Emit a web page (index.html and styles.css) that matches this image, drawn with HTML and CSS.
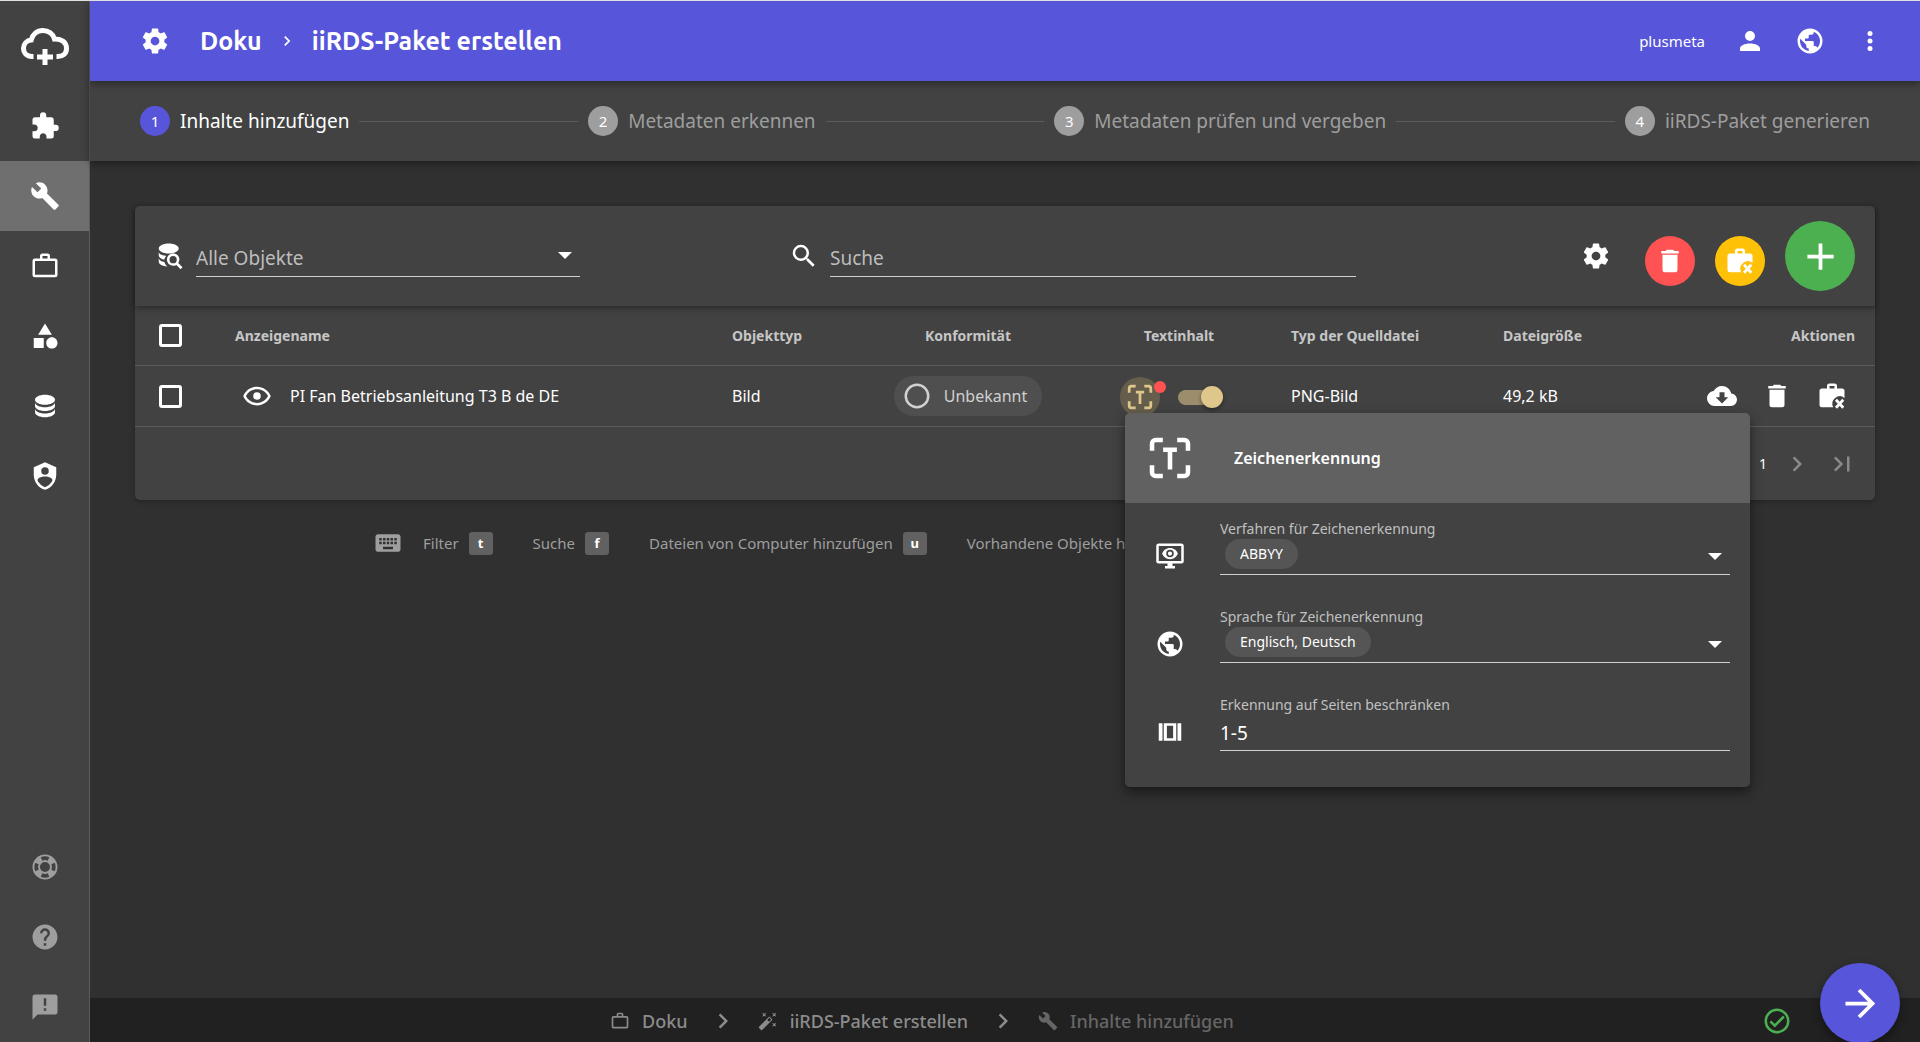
FILE: index.html
```html
<!DOCTYPE html>
<html lang="de">
<head>
<meta charset="utf-8">
<meta name="viewport" content="width=device-width, initial-scale=1">
<title>iiRDS-Paket erstellen</title>
<link rel="stylesheet" href="styles.css">
</head>
<body>
<svg class="sprite" aria-hidden="true">
  <symbol id="cog" viewBox="0 0 24 24"><path d="M12,15.5A3.5,3.5 0 0,1 8.5,12A3.5,3.5 0 0,1 12,8.5A3.5,3.5 0 0,1 15.5,12A3.5,3.5 0 0,1 12,15.5M19.43,12.97C19.47,12.65 19.5,12.33 19.5,12C19.5,11.67 19.47,11.34 19.43,11L21.54,9.37C21.73,9.22 21.78,8.95 21.66,8.73L19.66,5.27C19.54,5.05 19.27,4.96 19.05,5.05L16.56,6.05C16.04,5.66 15.5,5.32 14.87,5.07L14.5,2.42C14.46,2.18 14.25,2 14,2H10C9.75,2 9.54,2.18 9.5,2.42L9.13,5.07C8.5,5.32 7.96,5.66 7.44,6.05L4.95,5.05C4.73,4.96 4.46,5.05 4.34,5.27L2.34,8.73C2.21,8.95 2.27,9.22 2.46,9.37L4.57,11C4.53,11.34 4.5,11.67 4.5,12C4.5,12.33 4.53,12.65 4.57,12.97L2.46,14.63C2.27,14.78 2.21,15.05 2.34,15.27L4.34,18.73C4.46,18.95 4.73,19.03 4.95,18.95L7.44,17.94C7.96,18.34 8.5,18.68 9.13,18.93L9.5,21.58C9.54,21.82 9.75,22 10,22H14C14.25,22 14.46,21.82 14.5,21.58L14.87,18.93C15.5,18.67 16.04,18.34 16.56,17.94L19.05,18.95C19.27,19.03 19.54,18.95 19.66,18.73L21.66,15.27C21.78,15.05 21.73,14.78 21.54,14.63L19.43,12.97Z"/></symbol>
  <symbol id="puzzle" viewBox="0 0 24 24"><path d="M20.5,11H19V7C19,5.89 18.1,5 17,5H13V3.5A2.5,2.5 0 0,0 10.5,1A2.5,2.5 0 0,0 8,3.5V5H4A2,2 0 0,0 2,7V10.8H3.5C5,10.8 6.2,12 6.2,13.5C6.2,15 5,16.2 3.5,16.2H2V20A2,2 0 0,0 4,22H7.8V20.5C7.8,19 9,17.8 10.5,17.8C12,17.8 13.2,19 13.2,20.5V22H17A2,2 0 0,0 19,20V16H20.5A2.5,2.5 0 0,0 23,13.5A2.5,2.5 0 0,0 20.5,11Z"/></symbol>
  <symbol id="wrench" viewBox="0 0 24 24"><path d="M22.7,19L13.6,9.9C14.5,7.6 14,4.9 12.1,3C10.1,1 7.1,0.6 4.7,1.7L9,6L6,9L1.6,4.7C0.4,7.1 0.9,10.1 2.9,12.1C4.8,14 7.5,14.5 9.8,13.6L18.9,22.7C19.3,23.1 19.9,23.1 20.3,22.7L22.6,20.4C23.1,20 23.1,19.3 22.7,19Z"/></symbol>
  <symbol id="briefcase" viewBox="0 0 24 24"><path fill-rule="evenodd" d="M10,2H14A2,2 0 0,1 16,4V6H20A2,2 0 0,1 22,8V19A2,2 0 0,1 20,21H4A2,2 0 0,1 2,19V8A2,2 0 0,1 4,6H8V4A2,2 0 0,1 10,2M10,4V6H14V4H10M4,8V19H20V8H4Z"/></symbol>
  <symbol id="shapes" viewBox="0 0 24 24"><path d="M11,13.5V21.5H3V13.5H11M12,2L17.5,11H6.5L12,2M17.5,13C20,13 22,15 22,17.5C22,20 20,22 17.5,22C15,22 13,20 13,17.5C13,15 15,13 17.5,13Z"/></symbol>
  <symbol id="database" viewBox="0 0 24 24"><path d="M12,3C7.58,3 4,4.79 4,7C4,9.21 7.58,11 12,11C16.42,11 20,9.21 20,7C20,4.79 16.42,3 12,3M4,9V12C4,14.21 7.58,16 12,16C16.42,16 20,14.21 20,12V9C20,11.21 16.42,13 12,13C7.58,13 4,11.21 4,9M4,14V17C4,19.21 7.58,21 12,21C16.42,21 20,19.21 20,17V14C20,16.21 16.42,18 12,18C7.58,18 4,16.21 4,14Z"/></symbol>
  <symbol id="shield" viewBox="0 0 24 24"><path d="M12,1L3,5V11C3,16.55 6.84,21.74 12,23C17.16,21.74 21,16.55 21,11V5L12,1M12,5A3,3 0 0,1 15,8A3,3 0 0,1 12,11A3,3 0 0,1 9,8A3,3 0 0,1 12,5M17.13,17C15.92,18.85 14.11,20.24 12,20.92C9.89,20.24 8.08,18.85 6.87,17C6.53,16.5 6.24,16 6,15.47C6,13.82 8.71,12.47 12,12.47C15.29,12.47 18,13.79 18,15.47C17.76,16 17.47,16.5 17.13,17Z"/></symbol>
  <symbol id="lifebuoy" viewBox="0 0 24 24"><path d="M19.79,15.41C20.74,13.24 20.74,10.75 19.79,8.59L17.05,9.83C17.65,11.21 17.65,12.78 17.06,14.17L19.79,15.41M15.42,4.21C13.25,3.26 10.76,3.26 8.59,4.21L9.83,6.94C11.22,6.35 12.79,6.35 14.18,6.95L15.42,4.21M4.21,8.58C3.26,10.76 3.26,13.24 4.21,15.42L6.95,14.17C6.35,12.79 6.35,11.21 6.95,9.82L4.21,8.58M8.59,19.79C10.76,20.74 13.25,20.74 15.42,19.78L14.18,17.05C12.8,17.65 11.22,17.65 9.84,17.06L8.59,19.79M12,2A10,10 0 0,1 22,12A10,10 0 0,1 12,22A10,10 0 0,1 2,12A10,10 0 0,1 12,2M12,8A4,4 0 0,0 8,12A4,4 0 0,0 12,16A4,4 0 0,0 16,12A4,4 0 0,0 12,8Z"/></symbol>
  <symbol id="help" viewBox="0 0 24 24"><path d="M15.07,11.25L14.17,12.17C13.45,12.89 13,13.5 13,15H11V14.5C11,13.39 11.45,12.39 12.17,11.67L13.41,10.41C13.78,10.05 14,9.55 14,9C14,7.89 13.1,7 12,7A2,2 0 0,0 10,9H8A4,4 0 0,1 12,5A4,4 0 0,1 16,9C16,9.88 15.64,10.67 15.07,11.25M13,19H11V17H13M12,2A10,10 0 0,0 2,12A10,10 0 0,0 12,22A10,10 0 0,0 22,12C22,6.47 17.5,2 12,2Z"/></symbol>
  <symbol id="feedback" viewBox="0 0 24 24"><path fill-rule="evenodd" d="M4,2H20A2,2 0 0,1 22,4V16A2,2 0 0,1 20,18H6L2,22V4A2,2 0 0,1 4,2M11,5V11H13V5H11M11,13V15H13V13H11Z"/></symbol>
  <symbol id="account" viewBox="0 0 24 24"><path d="M12,4A4,4 0 0,1 16,8A4,4 0 0,1 12,12A4,4 0 0,1 8,8A4,4 0 0,1 12,4M12,14C16.42,14 20,15.79 20,18V20H4V18C4,15.79 7.58,14 12,14Z"/></symbol>
  <symbol id="earth" viewBox="0 0 24 24"><path d="M17.9,17.39C17.64,16.59 16.89,16 16,16H15V13A1,1 0 0,0 14,12H8V10H10A1,1 0 0,0 11,9V7H13A2,2 0 0,0 15,5V4.59C17.93,5.77 20,8.64 20,12C20,14.08 19.2,15.97 17.9,17.39M11,19.93C7.05,19.44 4,16.08 4,12C4,11.38 4.08,10.78 4.21,10.21L9,15V16A2,2 0 0,0 11,18M12,2A10,10 0 0,0 2,12A10,10 0 0,0 12,22A10,10 0 0,0 22,12A10,10 0 0,0 12,2Z"/></symbol>
  <symbol id="dots" viewBox="0 0 24 24"><circle cx="12" cy="6" r="2"/><circle cx="12" cy="12" r="2"/><circle cx="12" cy="18" r="2"/></symbol>
  <symbol id="right" viewBox="0 0 24 24"><path d="M8.59,16.58L13.17,12L8.59,7.41L10,6L16,12L10,18L8.59,16.58Z"/></symbol>
  <symbol id="last" viewBox="0 0 24 24"><path d="M5.59,7.41L10.18,12L5.59,16.59L7,18L13,12L7,6L5.59,7.41M16,6H18V18H16V6Z"/></symbol>
  <symbol id="magnify" viewBox="0 0 24 24"><path d="M9.5,3A6.5,6.5 0 0,1 16,9.5C16,11.11 15.41,12.59 14.44,13.73L14.71,14H15.5L20.5,19L19,20.5L14,15.5V14.71L13.73,14.44C12.59,15.41 11.11,16 9.5,16A6.5,6.5 0 0,1 3,9.5A6.5,6.5 0 0,1 9.5,3M9.5,5C7,5 5,7 5,9.5C5,12 7,14 9.5,14C12,14 14,12 14,9.5C14,7 12,5 9.5,5Z"/></symbol>
  <symbol id="dbsearch" viewBox="0 0 24 24"><path d="M11,2C6.6,2 3,3.8 3,6C3,8.2 6.6,10 11,10C15.4,10 19,8.2 19,6C19,3.8 15.4,2 11,2M3,8.5V11.5C3,13 4.8,14.3 7.4,15C7.6,13.8 8.2,12.7 9,11.9C5.6,11.6 3,10.2 3,8.5M3,13.5V16.5C3,18.5 6,20 10,20.4C8.7,19.5 7.8,18.2 7.5,16.8C4.8,16.2 3,14.9 3,13.5Z"/><path fill-rule="evenodd" d="M14.5,9.8A5,5 0 0,1 18.6,17.6L22,21L20.5,22.5L17.1,19.1A5,5 0 1,1 14.5,9.8M14.5,12A2.9,2.9 0 1,0 14.5,17.8A2.9,2.9 0 0,0 14.5,12Z"/></symbol>
  <symbol id="trash" viewBox="0 0 24 24"><path d="M19,4H15.5L14.5,3H9.5L8.5,4H5V6H19M6,19A2,2 0 0,0 8,21H16A2,2 0 0,0 18,19V7H6V19Z"/></symbol>
  <symbol id="caseremove" viewBox="0 0 24 24"><path fill-rule="evenodd" d="M10,2H14A2,2 0 0,1 16,4V6H20A2,2 0 0,1 22,8V13.5A6,6 0 0,0 13,21H4A2,2 0 0,1 2,19V8A2,2 0 0,1 4,6H8V4A2,2 0 0,1 10,2M10,4V6H14V4H10Z"/><path d="M15.2,15L21,21.4M21,15L15.2,21.4" fill="none" stroke="currentColor" stroke-width="2.2"/></symbol>
  <symbol id="plus" viewBox="0 0 24 24"><path d="M19,13H13V19H11V13H5V11H11V5H13V11H19V13Z"/></symbol>
  <symbol id="eye" viewBox="0 0 24 24"><path d="M12,9A3,3 0 0,1 15,12A3,3 0 0,1 12,15A3,3 0 0,1 9,12A3,3 0 0,1 12,9M12,4.5C17,4.5 21.27,7.61 23,12C21.27,16.39 17,19.5 12,19.5C7,19.5 2.73,16.39 1,12C2.73,7.61 7,4.5 12,4.5M3.18,12C4.83,15.36 8.24,17.5 12,17.5C15.76,17.5 19.17,15.36 20.82,12C19.17,8.64 15.76,6.5 12,6.5C8.24,6.5 4.83,8.64 3.18,12Z"/></symbol>
  <symbol id="circle" viewBox="0 0 24 24"><circle cx="12" cy="12" r="9" fill="none" stroke="currentColor" stroke-width="2"/></symbol>
  <symbol id="ocr" viewBox="0 0 24 24"><path d="M4.5,9V6A1.5,1.5 0 0,1 6,4.5H9M15,4.5H18A1.5,1.5 0 0,1 19.5,6V9M19.5,15V18A1.5,1.5 0 0,1 18,19.5H15M9,19.5H6A1.5,1.5 0 0,1 4.5,18V15" transform="translate(-1.8 -1.8) scale(1.15)" fill="none" stroke="currentColor" stroke-width="1.9"/><path d="M8.7,8H15.3M12,8V17.5" fill="none" stroke="currentColor" stroke-width="2.2"/></symbol>
  <symbol id="download" viewBox="0 0 24 24"><path d="M17,13L12,18L7,13H10V9H14V13M19.35,10.03C18.67,6.59 15.64,4 12,4C9.11,4 6.6,5.64 5.35,8.03C2.34,8.36 0,10.9 0,14A6,6 0 0,0 6,20H19A5,5 0 0,0 24,15C24,12.36 21.95,10.22 19.35,10.03Z"/></symbol>
  <symbol id="keyboard" viewBox="0 0 24 24"><path d="M19,10H17V8H19M19,13H17V11H19M16,10H14V8H16M16,13H14V11H16M16,17H8V15H16M7,10H5V8H7M7,13H5V11H7M8,11H10V13H8M8,8H10V10H8M11,11H13V13H11M11,8H13V10H11M20,5H4C2.89,5 2,5.89 2,7V17A2,2 0 0,0 4,19H20A2,2 0 0,0 22,17V7C22,5.89 21.1,5 20,5Z"/></symbol>
  <symbol id="monitor" viewBox="0 0 24 24"><path fill-rule="evenodd" d="M3,2H21A2,2 0 0,1 23,4V16A2,2 0 0,1 21,18H14V20H16V22H8V20H10V18H3A2,2 0 0,1 1,16V4A2,2 0 0,1 3,2M3,4V16H21V4H3M12,5.5C15,5.5 17.3,7.3 18.3,10C17.3,12.7 15,14.5 12,14.5C9,14.5 6.7,12.7 5.7,10C6.7,7.3 9,5.5 12,5.5M12,7A3,3 0 1,0 12,13A3,3 0 0,0 12,7M12,8.3A1.7,1.7 0 1,1 12,11.7A1.7,1.7 0 0,1 12,8.3Z"/></symbol>
  <symbol id="pages" viewBox="0 0 24 24"><path fill-rule="evenodd" d="M7,5H17V19H7V5M9.5,7V17H14.5V7H9.5M3,5H6V19H3V5M18,5H21V19H18V5Z"/></symbol>
  <symbol id="wand" viewBox="0 0 24 24"><path d="M7.5,5.6L5,7L6.4,4.5L5,2L7.5,3.4L10,2L8.6,4.5L10,7L7.5,5.6M19.5,15.4L22,14L20.6,16.5L22,19L19.5,17.6L17,19L18.4,16.5L17,14L19.5,15.4M22,2L20.6,4.5L22,7L19.5,5.6L17,7L18.4,4.5L17,2L19.5,3.4L22,2M13.34,12.78L15.78,10.34L13.66,8.22L11.22,10.66L13.34,12.78M14.37,7.29L16.71,9.63C17.1,10 17.1,10.65 16.71,11.04L5.04,22.71C4.65,23.1 4,23.1 3.63,22.71L1.29,20.37C0.9,20 0.9,19.35 1.29,18.96L12.96,7.29C13.35,6.9 14,6.9 14.37,7.29Z"/></symbol>
  <symbol id="check" viewBox="0 0 24 24"><g fill="none" stroke="currentColor" stroke-width="2"><circle cx="12" cy="12" r="9"/><path d="M6.7,12.3L10.2,15.7L17.5,8.4"/></g></symbol>
  <symbol id="arrow" viewBox="0 0 24 24"><path d="M4,11V13H16L10.5,18.5L11.92,19.92L19.84,12L11.92,4.08L10.5,5.5L16,11H4Z"/></symbol>
</svg>

<nav class="sidebar" aria-label="Hauptnavigation">
  <a class="logo" href="#" aria-label="Startseite"><svg class="logo-mark" viewBox="0 0 48 37"><path d="M12.5,28.5H11C6,28.5 2.5,25 2.5,20.3C2.5,15.8 5.8,12.4 10.2,12C11.5,6.5 16,2.5 21.8,2.5C27.5,2.5 32,6 33.5,11C40.5,10.5 45.5,14.5 45.5,20.5C45.5,25.5 42,28.5 36.5,28.5H35.5M24,21V37M16,29H32" fill="none" stroke="currentColor" stroke-width="5"/></svg></a>
  <a class="nav-item" href="#" aria-label="Erweiterungen"><svg class="icon"><use href="#puzzle"/></svg></a>
  <a class="nav-item active" href="#" aria-label="Werkzeuge"><svg class="icon"><use href="#wrench"/></svg></a>
  <a class="nav-item" href="#" aria-label="Projekte"><svg class="icon"><use href="#briefcase"/></svg></a>
  <a class="nav-item" href="#" aria-label="Objekte"><svg class="icon"><use href="#shapes"/></svg></a>
  <a class="nav-item" href="#" aria-label="Daten"><svg class="icon"><use href="#database"/></svg></a>
  <a class="nav-item" href="#" aria-label="Verwaltung"><svg class="icon"><use href="#shield"/></svg></a>
  <div class="nav-bottom">
    <a class="nav-item" href="#" aria-label="Support"><svg class="icon"><use href="#lifebuoy"/></svg></a>
    <a class="nav-item" href="#" aria-label="Hilfe"><svg class="icon"><use href="#help"/></svg></a>
    <a class="nav-item" href="#" aria-label="Feedback"><svg class="icon"><use href="#feedback"/></svg></a>
  </div>
</nav>

<div class="page">
  <header class="topbar">
    <svg class="icon"><use href="#cog"/></svg>
    <h1 class="title"><span>Doku</span><svg class="icon small"><use href="#right"/></svg><span>iiRDS-Paket erstellen</span></h1>
    <span class="user">plusmeta</span>
    <button class="icon-btn" aria-label="Konto"><svg class="icon"><use href="#account"/></svg></button>
    <button class="icon-btn" aria-label="Sprache"><svg class="icon"><use href="#earth"/></svg></button>
    <button class="icon-btn" aria-label="Mehr"><svg class="icon"><use href="#dots"/></svg></button>
  </header>

  <ol class="stepper">
    <li class="step current"><span class="num">1</span>Inhalte hinzufügen</li>
    <li class="step"><span class="num">2</span>Metadaten erkennen</li>
    <li class="step"><span class="num">3</span>Metadaten prüfen und vergeben</li>
    <li class="step"><span class="num">4</span>iiRDS-Paket generieren</li>
  </ol>

  <main class="content">
    <section class="card">
      <div class="toolbar">
        <div class="filter">
          <svg class="icon"><use href="#dbsearch"/></svg>
          <div class="line-field arrow"><select class="line-input" aria-label="Objektfilter"><option>Alle Objekte</option></select></div>
        </div>
        <div class="search">
          <svg class="icon"><use href="#magnify"/></svg>
          <div class="line-field"><input class="line-input" type="search" placeholder="Suche" aria-label="Suche"></div>
        </div>
        <div class="tools">
          <button class="icon-btn" aria-label="Einstellungen"><svg class="icon"><use href="#cog"/></svg></button>
          <button class="round red" aria-label="Löschen"><svg class="icon"><use href="#trash"/></svg></button>
          <button class="round amber" aria-label="Aus Projekt entfernen"><svg class="icon"><use href="#caseremove"/></svg></button>
          <button class="round green" aria-label="Hinzufügen"><svg class="icon large"><use href="#plus"/></svg></button>
        </div>
      </div>
      <table class="objects">
        <colgroup><col class="c-check"><col class="c-name"><col class="c-type"><col class="c-conf"><col class="c-text"><col class="c-source"><col class="c-size"><col class="c-actions"></colgroup>
        <thead>
          <tr>
            <th><input class="tick" type="checkbox" aria-label="Alle auswählen"></th>
            <th>Anzeigename</th><th>Objekttyp</th><th class="center">Konformität</th><th class="center">Textinhalt</th><th>Typ der Quelldatei</th><th>Dateigröße</th><th class="right">Aktionen</th>
          </tr>
        </thead>
        <tbody>
          <tr>
            <td><input class="tick" type="checkbox" aria-label="PI Fan Betriebsanleitung auswählen"></td>
            <td><div class="name"><svg class="icon"><use href="#eye"/></svg><span>PI Fan Betriebsanleitung T3 B de DE</span></div></td>
            <td>Bild</td>
            <td class="center"><span class="status"><svg class="icon"><use href="#circle"/></svg>Unbekannt</span></td>
            <td>
              <div class="text-cell">
                <div class="ocr">
                  <button class="ocr-btn" aria-label="Zeichenerkennung"><svg class="icon"><use href="#ocr"/></svg></button>
                  <span class="dot"></span>
                  <form class="popover">
                    <div class="pop-head"><svg class="icon huge"><use href="#ocr"/></svg><h2 class="pop-title">Zeichenerkennung</h2></div>
                    <div class="pop-body">
                      <div class="pop-row">
                        <svg class="icon"><use href="#monitor"/></svg>
                        <div class="field"><label for="method">Verfahren für Zeichenerkennung</label><div class="line-field arrow"><select class="chip" id="method"><option>ABBYY</option></select></div></div>
                      </div>
                      <div class="pop-row">
                        <svg class="icon"><use href="#earth"/></svg>
                        <div class="field"><label for="lang">Sprache für Zeichenerkennung</label><div class="line-field arrow"><select class="chip" id="lang"><option>Englisch, Deutsch</option></select></div></div>
                      </div>
                      <div class="pop-row">
                        <svg class="icon"><use href="#pages"/></svg>
                        <div class="field"><label for="pages-input">Erkennung auf Seiten beschränken</label><div class="line-field"><input class="line-input strong" id="pages-input" type="text" value="1-5"></div></div>
                      </div>
                    </div>
                  </form>
                </div>
                <input class="switch" type="checkbox" role="switch" checked aria-label="Textinhalt verwenden">
              </div>
            </td>
            <td>PNG-Bild</td>
            <td>49,2 kB</td>
            <td>
              <div class="actions">
                <button class="icon-btn" aria-label="Herunterladen"><svg class="icon"><use href="#download"/></svg></button>
                <button class="icon-btn" aria-label="Löschen"><svg class="icon"><use href="#trash"/></svg></button>
                <button class="icon-btn" aria-label="Aus Projekt entfernen"><svg class="icon"><use href="#caseremove"/></svg></button>
              </div>
            </td>
          </tr>
        </tbody>
      </table>
      <div class="pager">
        <span>1</span>
        <button class="icon-btn muted" aria-label="Nächste Seite"><svg class="icon"><use href="#right"/></svg></button>
        <button class="icon-btn muted" aria-label="Letzte Seite"><svg class="icon"><use href="#last"/></svg></button>
      </div>
    </section>

    <div class="shortcuts">
      <svg class="icon"><use href="#keyboard"/></svg>
      <span class="shortcut">Filter <kbd>t</kbd></span>
      <span class="shortcut">Suche <kbd>f</kbd></span>
      <span class="shortcut">Dateien von Computer hinzufügen <kbd>u</kbd></span>
      <span class="shortcut">Vorhandene Objekte hinzufügen</span>
    </div>
  </main>

  <footer class="bottombar">
    <nav class="crumbs" aria-label="Brotkrumen">
      <a class="crumb" href="#"><svg class="icon small"><use href="#briefcase"/></svg>Doku</a>
      <svg class="icon"><use href="#right"/></svg>
      <a class="crumb" href="#"><svg class="icon small"><use href="#wand"/></svg>iiRDS-Paket erstellen</a>
      <svg class="icon"><use href="#right"/></svg>
      <a class="crumb here" href="#"><svg class="icon small"><use href="#wrench"/></svg>Inhalte hinzufügen</a>
    </nav>
    <svg class="icon ok"><use href="#check"/></svg>
    <button class="next" aria-label="Weiter"><svg class="icon large"><use href="#arrow"/></svg></button>
  </footer>
</div>
</body>
</html>
```
FILE: styles.css
```css
* { box-sizing: border-box; }

body {
  margin: 0;
  min-height: 100vh;
  display: flex;
  border-top: 1px solid #e0e0e0;
  background: #303030;
  color: #fff;
  font: 16px/24px "Noto Sans", "Open Sans", sans-serif;
}

a { color: inherit; text-decoration: none; }
button, input, select { font: inherit; color: inherit; }
button { border: 0; padding: 0; background: none; cursor: pointer; }

.sprite { position: absolute; width: 0; height: 0; }
.icon { display: block; flex: none; width: 30px; height: 30px; fill: currentColor; }
.icon.small { width: 20px; height: 20px; }
.icon.large { width: 45px; height: 45px; }
.icon.huge { width: 50px; height: 50px; }
.icon-btn { display: flex; }

/* Sidebar */
.sidebar {
  display: flex;
  flex-direction: column;
  flex: none;
  width: 90px;
  background: #424242;
  border-right: 1px solid #5c5c5c;
}
.logo, .nav-item { display: flex; align-items: center; justify-content: center; }
.logo { height: 90px; }
.logo-mark { width: 48px; height: 37px; }
.nav-item { height: 70px; }
.nav-item.active { background: #6f6f6f; }
.nav-bottom { margin-top: auto; color: #9e9e9e; }

.page { flex: 1; min-width: 0; display: flex; flex-direction: column; }

/* Top bar */
.topbar {
  z-index: 2;
  display: flex;
  align-items: center;
  gap: 30px;
  height: 80px;
  padding: 0 35px 0 50px;
  background: #5755d9;
  box-shadow: 0 2px 8px rgba(0, 0, 0, .45);
}
.title {
  flex: 1;
  display: flex;
  align-items: center;
  gap: 15px;
  margin: 0;
  font: 700 25px/32px Ubuntu, "Noto Sans", sans-serif;
}
.user { font-size: 15px; }

/* Stepper */
.stepper {
  z-index: 1;
  display: flex;
  align-items: center;
  gap: 10px;
  height: 80px;
  margin: 0;
  padding: 0 50px;
  list-style: none;
  background: #424242;
  box-shadow: 0 2px 8px rgba(0, 0, 0, .45);
  color: #9e9e9e;
  font-size: 19px;
}
.step { display: flex; align-items: center; gap: 10px; flex: 1 1 auto; white-space: nowrap; }
.step:last-child { flex: none; }
.step:not(:last-child)::after { content: ""; flex: 1; height: 1px; background: #5c5c5c; }
.step.current { color: #fff; }
.num {
  width: 30px;
  border-radius: 50%;
  background: #9e9e9e;
  color: #fff;
  font-size: 15px;
  line-height: 30px;
  text-align: center;
}
.current .num { background: #5755d9; }

/* Card */
.content { flex: 1; padding: 45px; }
.card { border-radius: 5px; background: #424242; box-shadow: 0 2px 5px rgba(0, 0, 0, .25); }
.toolbar {
  display: flex;
  align-items: center;
  height: 100px;
  padding: 0 20px;
  box-shadow: 0 2px 6px rgba(0, 0, 0, .4);
}
.filter, .search { display: flex; align-items: center; }
.filter { flex: 0 1 425px; gap: 11px; }
.search { flex: 0 1 567px; gap: 11px; margin-left: 209px; }
.tools { display: flex; align-items: center; gap: 20px; margin-left: auto; }
.tools .icon-btn { margin-right: 14px; }
.line-field { position: relative; flex: 1; display: flex; border-bottom: 1px solid #cfcfcf; }
.arrow::after {
  content: "";
  position: absolute;
  right: 8px;
  top: 50%;
  margin-top: -4px;
  border: 7px solid transparent;
  border-top-color: #fff;
  border-bottom: 0;
  pointer-events: none;
}
.line-input {
  width: 100%;
  height: 40px;
  padding: 4px 0 0;
  border: 0;
  outline: 0;
  background: none;
  appearance: none;
  color: #bdbdbd;
  font-size: 19px;
}
.line-input::placeholder { color: #bdbdbd; opacity: 1; }
.line-input.strong { height: 36px; padding: 0; color: #fff; }
.round { display: grid; place-items: center; width: 50px; height: 50px; border-radius: 50%; margin-top: 10px; }
.red { background: #ff5252; }
.amber { background: #ffc107; }
.green { width: 70px; height: 70px; margin-top: 0; background: #4caf50; }

/* Table */
.objects { width: 100%; table-layout: fixed; border-collapse: separate; border-spacing: 0; }
.c-check { width: 80px; }
.c-type { width: 137px; }
.c-conf { width: 238px; }
.c-text { width: 184px; }
.c-source { width: 212px; }
.c-size { width: 172px; }
.c-actions { width: 220px; }
.objects th, .objects td { padding: 0 20px; border-bottom: 1px solid #5c5c5c; text-align: left; white-space: nowrap; }
.objects th { height: 60px; color: #c6c6c6; font-size: 14px; font-weight: 700; }
.objects td { height: 61px; }
.objects .center { text-align: center; }
.objects .right { text-align: right; }
.tick {
  display: block;
  appearance: none;
  width: 23px;
  height: 23px;
  margin: 0 0 0 4px;
  border: 3px solid #fff;
  border-radius: 3px;
}
.name { display: flex; align-items: center; gap: 18px; padding-left: 7px; }
.status {
  display: inline-flex;
  align-items: center;
  gap: 12px;
  height: 40px;
  padding: 0 15px 0 8px;
  border-radius: 20px;
  background: #4f4f4f;
  color: #d0d0d0;
  vertical-align: middle;
}
.text-cell { display: flex; align-items: center; gap: 18px; padding: 2px 0 0 13px; }
.ocr { position: relative; }
.ocr-btn { display: grid; place-items: center; width: 40px; height: 40px; border-radius: 50%; background: #665e4c; color: #dfc78c; }
.dot { position: absolute; top: 4px; right: -6px; width: 12px; height: 12px; border-radius: 50%; background: #ff5252; }
.switch { position: relative; appearance: none; width: 45px; height: 22px; margin: 0; }
.switch::before, .switch::after { content: ""; position: absolute; }
.switch::before { inset: 4px 5px 3px 0; border-radius: 8px; background: #9c8e6d; }
.switch::after { top: 0; right: 0; width: 22px; height: 22px; border-radius: 50%; background: #dfc78c; box-shadow: 0 2px 4px rgba(0, 0, 0, .4); }
.actions { display: flex; justify-content: flex-end; gap: 25px; padding-right: 8px; }
.pager { display: flex; align-items: center; justify-content: flex-end; gap: 15px; height: 73px; padding: 0 18px; font-size: 14px; }
.muted { color: #8a8a8a; }

/* OCR popover */
.popover {
  position: absolute;
  z-index: 3;
  left: 5px;
  top: 36px;
  width: 625px;
  border-radius: 5px;
  background: #424242;
  box-shadow: 0 5px 12px rgba(0, 0, 0, .5);
  overflow: hidden;
}
.pop-head { display: flex; align-items: center; gap: 39px; height: 90px; padding: 0 20px; background: #616161; }
.pop-title { margin: 0; font-size: 16px; font-weight: 600; }
.pop-body { display: flex; flex-direction: column; gap: 32px; padding: 16px 20px 36px 30px; }
.pop-row { display: flex; align-items: center; gap: 35px; }
.pop-row > .icon { margin-top: 18px; }
.field { flex: 1; }
.field label { display: block; line-height: 20px; font-size: 14px; color: #c0c0c0; }
.field .line-field { height: 36px; align-items: flex-start; }
.chip {
  appearance: none;
  field-sizing: content;
  height: 30px;
  margin-left: 5px;
  padding: 0 15px;
  border: 0;
  border-radius: 15px;
  background: #555;
  font-size: 14px;
}

/* Keyboard shortcuts */
.shortcuts { display: flex; align-items: center; gap: 40px; padding: 28px 0 0 238px; color: #9e9e9e; font-size: 15px; }
.shortcuts .icon { margin-right: -20px; }
.shortcut { display: flex; align-items: center; gap: 10px; white-space: nowrap; }
kbd { width: 24px; border-radius: 3px; background: #616161; color: #fff; font: 700 13px/23px "Noto Sans", sans-serif; text-align: center; }

/* Bottom bar */
.bottombar {
  position: relative;
  display: flex;
  align-items: center;
  justify-content: center;
  height: 44px;
  padding: 2px 166px 0 0;
  background: #212121;
  color: #8c8c8c;
  font-size: 18px;
  font-weight: 500;
}
.crumbs { display: flex; align-items: center; gap: 20px; }
.crumb { display: flex; align-items: center; gap: 12px; }
.here { color: #666; }
.ok { position: absolute; right: 128px; color: #4caf50; }
.next {
  position: absolute;
  right: 20px;
  bottom: -1px;
  display: grid;
  place-items: center;
  width: 80px;
  height: 80px;
  border-radius: 50%;
  background: #5755d9;
  color: #fff;
  box-shadow: 0 4px 10px rgba(0, 0, 0, .4);
}
```
